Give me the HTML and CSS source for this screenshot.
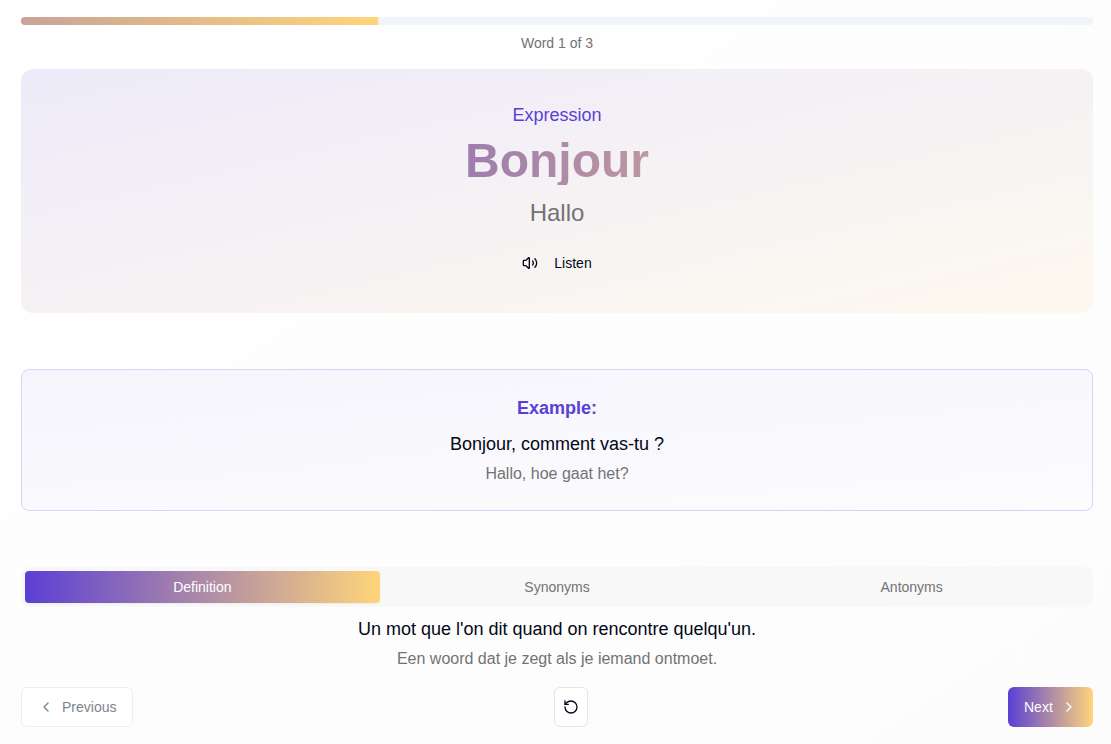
FILE: index.html
```html
<!DOCTYPE html>
<html lang="fr">
<head>
<meta charset="utf-8">
<title>Bonjour</title>
<link rel="stylesheet" href="styles.css">
</head>
<body>
<main class="lesson">
  <div class="progress"><div class="progress-fill"></div></div>
  <p class="counter">Word 1 of 3</p>
  <section class="word-card">
    <p class="kind">Expression</p>
    <h1 class="word">Bonjour</h1>
    <p class="translation">Hallo</p>
    <button class="listen">
      <svg class="icon" viewBox="0 0 24 24"><path d="M11 4.702a.705.705 0 0 0-1.203-.498L6.413 7.587A1.4 1.4 0 0 1 5.416 8H3a1 1 0 0 0-1 1v6a1 1 0 0 0 1 1h2.416a1.4 1.4 0 0 1 .997.413l3.383 3.384A.705.705 0 0 0 11 19.298z"/><path d="M16 9a5 5 0 0 1 0 6"/><path d="M19.364 18.364a9 9 0 0 0 0-12.728"/></svg>
      <span>Listen</span>
    </button>
  </section>
  <section class="example">
    <h2 class="example-title">Example:</h2>
    <p class="source">Bonjour, comment vas-tu ?</p>
    <p class="target">Hallo, hoe gaat het?</p>
  </section>
  <section class="details">
    <div class="tabs">
      <button class="tab tab-active">Definition</button>
      <button class="tab">Synonyms</button>
      <button class="tab">Antonyms</button>
    </div>
    <div class="definition">
      <p class="source">Un mot que l'on dit quand on rencontre quelqu'un.</p>
      <p class="target">Een woord dat je zegt als je iemand ontmoet.</p>
    </div>
  </section>
  <nav class="controls">
    <button class="btn previous" disabled><svg class="icon" viewBox="0 0 24 24"><path d="m15 18-6-6 6-6"/></svg>Previous</button>
    <button class="btn reset" aria-label="Reset"><svg class="icon" viewBox="0 0 24 24"><path d="M3 12a9 9 0 1 0 9-9 9.75 9.75 0 0 0-6.74 2.74L3 8"/><path d="M3 3v5h5"/></svg></button>
    <button class="btn next">Next<svg class="icon" viewBox="0 0 24 24"><path d="m9 18 6-6-6-6"/></svg></button>
  </nav>
</main>
</body>
</html>
```
FILE: styles.css
```css
* { box-sizing: border-box; margin: 0; }
body {
  min-height: 744px;
  font-family: "Liberation Sans", Arial, sans-serif;
  color: #020817;
  background: linear-gradient(to bottom right, #fff, #fcfcfd);
}
button { font: inherit; color: inherit; border: 0; background: none; padding: 0; }
.lesson { padding: 17px 18px 17px 21px; text-align: center; }
.progress { height: 8px; border-radius: 8px; overflow: hidden; background: #f1f5f9; }
.progress-fill {
  height: 100%;
  width: 100%;
  transform: translateX(-66.667%);
  background: linear-gradient(90deg, #5b3fd4, #ffd57a);
}
.counter { margin-top: 8px; font-size: 14px; line-height: 20px; color: #737373; }
.word-card {
  display: flex;
  flex-direction: column;
  align-items: center;
  height: 244px;
  margin-top: 16px;
  padding: 32px;
  border-radius: 12px;
  background: linear-gradient(to bottom right, rgba(91, 63, 212, .1), rgba(248, 208, 116, .11)), #fefefe;
}
.kind { font-size: 18px; line-height: 28px; color: #5b3fd4; }
.word {
  width: 100%;
  margin-top: 8px;
  font-size: 48px;
  line-height: 48px;
  font-weight: 700;
  color: transparent;
  background: linear-gradient(90deg, #5b3fd4, #ffd57a);
  -webkit-background-clip: text;
  background-clip: text;
}
.translation { margin-top: 12px; font-size: 24px; line-height: 32px; color: #737373; }
.listen {
  display: flex;
  align-items: center;
  gap: 16px;
  height: 36px;
  margin-top: 16px;
  font-size: 14px;
}
.icon {
  width: 16px;
  height: 16px;
  flex: none;
  fill: none;
  stroke: currentColor;
  stroke-width: 2;
  stroke-linecap: round;
  stroke-linejoin: round;
}
.example {
  margin-top: 56px;
  padding: 24px;
  border: 1px solid #d9d3f5;
  border-radius: 8px;
  background: linear-gradient(to bottom right, rgba(91, 63, 212, .05), rgba(91, 63, 212, .005));
}
.example-title { margin-bottom: 8px; font-size: 18px; line-height: 28px; color: #5b3fd4; }
.source { font-size: 18px; line-height: 28px; }
.target { margin-top: 4px; font-size: 16px; line-height: 24px; color: #737373; }
.details { margin-top: 56px; }
.tabs {
  display: grid;
  grid-template-columns: repeat(3, 1fr);
  height: 40px;
  padding: 4px;
  border-radius: 8px;
  background: #f8f8f9;
}
.tab { font-size: 14px; color: #737373; border-radius: 4px; }
.tab-active {
  color: #fff;
  background: linear-gradient(90deg, #5b3fd4, #ffd57a);
  box-shadow: 0 1px 2px rgba(0, 0, 0, .05);
}
.definition { margin-top: 8px; }
.controls { display: flex; justify-content: space-between; margin-top: 16px; }
.btn {
  display: flex;
  align-items: center;
  height: 40px;
  font-size: 14px;
  border-radius: 6px;
}
.previous { width: 112px; gap: 8px; padding-left: 16px; color: #80838b; background: #fff; border: 1px solid #edebfa; }
.reset { width: 34px; justify-content: center; background: #fff; border: 1px solid #e5e5e5; }
.next { width: 85px; gap: 8px; padding-left: 16px; color: #fff; background: linear-gradient(90deg, #5b3fd4, #ffd57a); }
```
